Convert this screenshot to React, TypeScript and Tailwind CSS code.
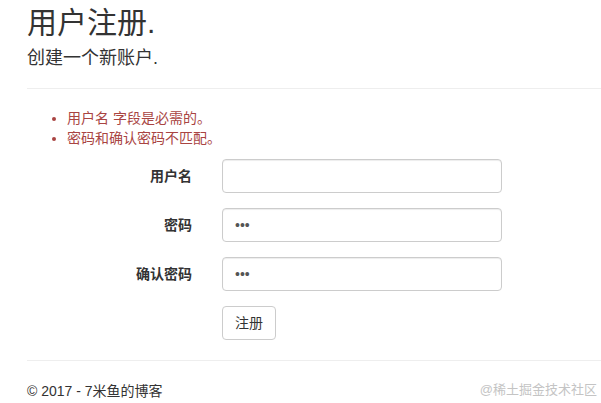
const font = { fontFamily: '"Liberation Sans", "Noto Sans CJK SC", sans-serif' }

function Field({ label, type, value }: { label: string; type: string; value?: string }) {
  return (
    <div className="flex items-center mb-[15px]">
      <label className="w-[165px] text-right text-[14px] font-bold text-[#333]">{label}</label>
      <input
        type={type}
        defaultValue={value}
        readOnly
        className="ml-[30px] w-[280px] h-[34px] px-3 rounded-[4px] border border-[#ccc] text-[14px] text-[#555] bg-white shadow-[inset_0_1px_1px_rgba(0,0,0,0.075)] outline-none"
      />
    </div>
  )
}

export default function App() {
  return (
    <div className="relative w-[601px] h-[403px] bg-white overflow-hidden text-[#333]" style={font}>
      <div className="pl-[27px]">
        <h2 className="pt-[6px] text-[30px] leading-[33px] font-normal">用户注册.</h2>
        <h4 className="mt-[9px] text-[18px] leading-[20px] font-normal">创建一个新账户.</h4>
        <hr className="mt-[20px] border-0 border-t border-[#eee]" />

        <ul className="mt-[19px] mb-[11px] pl-[40px] list-disc text-[14px] leading-[20px] text-[#a94442]">
          <li>用户名 字段是必需的。</li>
          <li>密码和确认密码不匹配。</li>
        </ul>

        <form>
          <Field label="用户名" type="text" />
          <Field label="密码" type="password" value="abc" />
          <Field label="确认密码" type="password" value="abc" />
          <div className="pl-[195px]">
            <button
              type="button"
              className="h-[34px] px-3 rounded-[4px] border border-[#ccc] bg-white text-[14px] text-[#333]"
            >
              注册
            </button>
          </div>
        </form>

        <hr className="mt-[20px] border-0 border-t border-[#eee]" />
        <footer className="mt-[20px] text-[14px] leading-[20px]">© 2017 - 7米鱼的博客</footer>
      </div>

      <div className="absolute right-[4px] bottom-[4px] text-[13px] text-[#c4c4c4]">@稀土掘金技术社区</div>
    </div>
  )
}
